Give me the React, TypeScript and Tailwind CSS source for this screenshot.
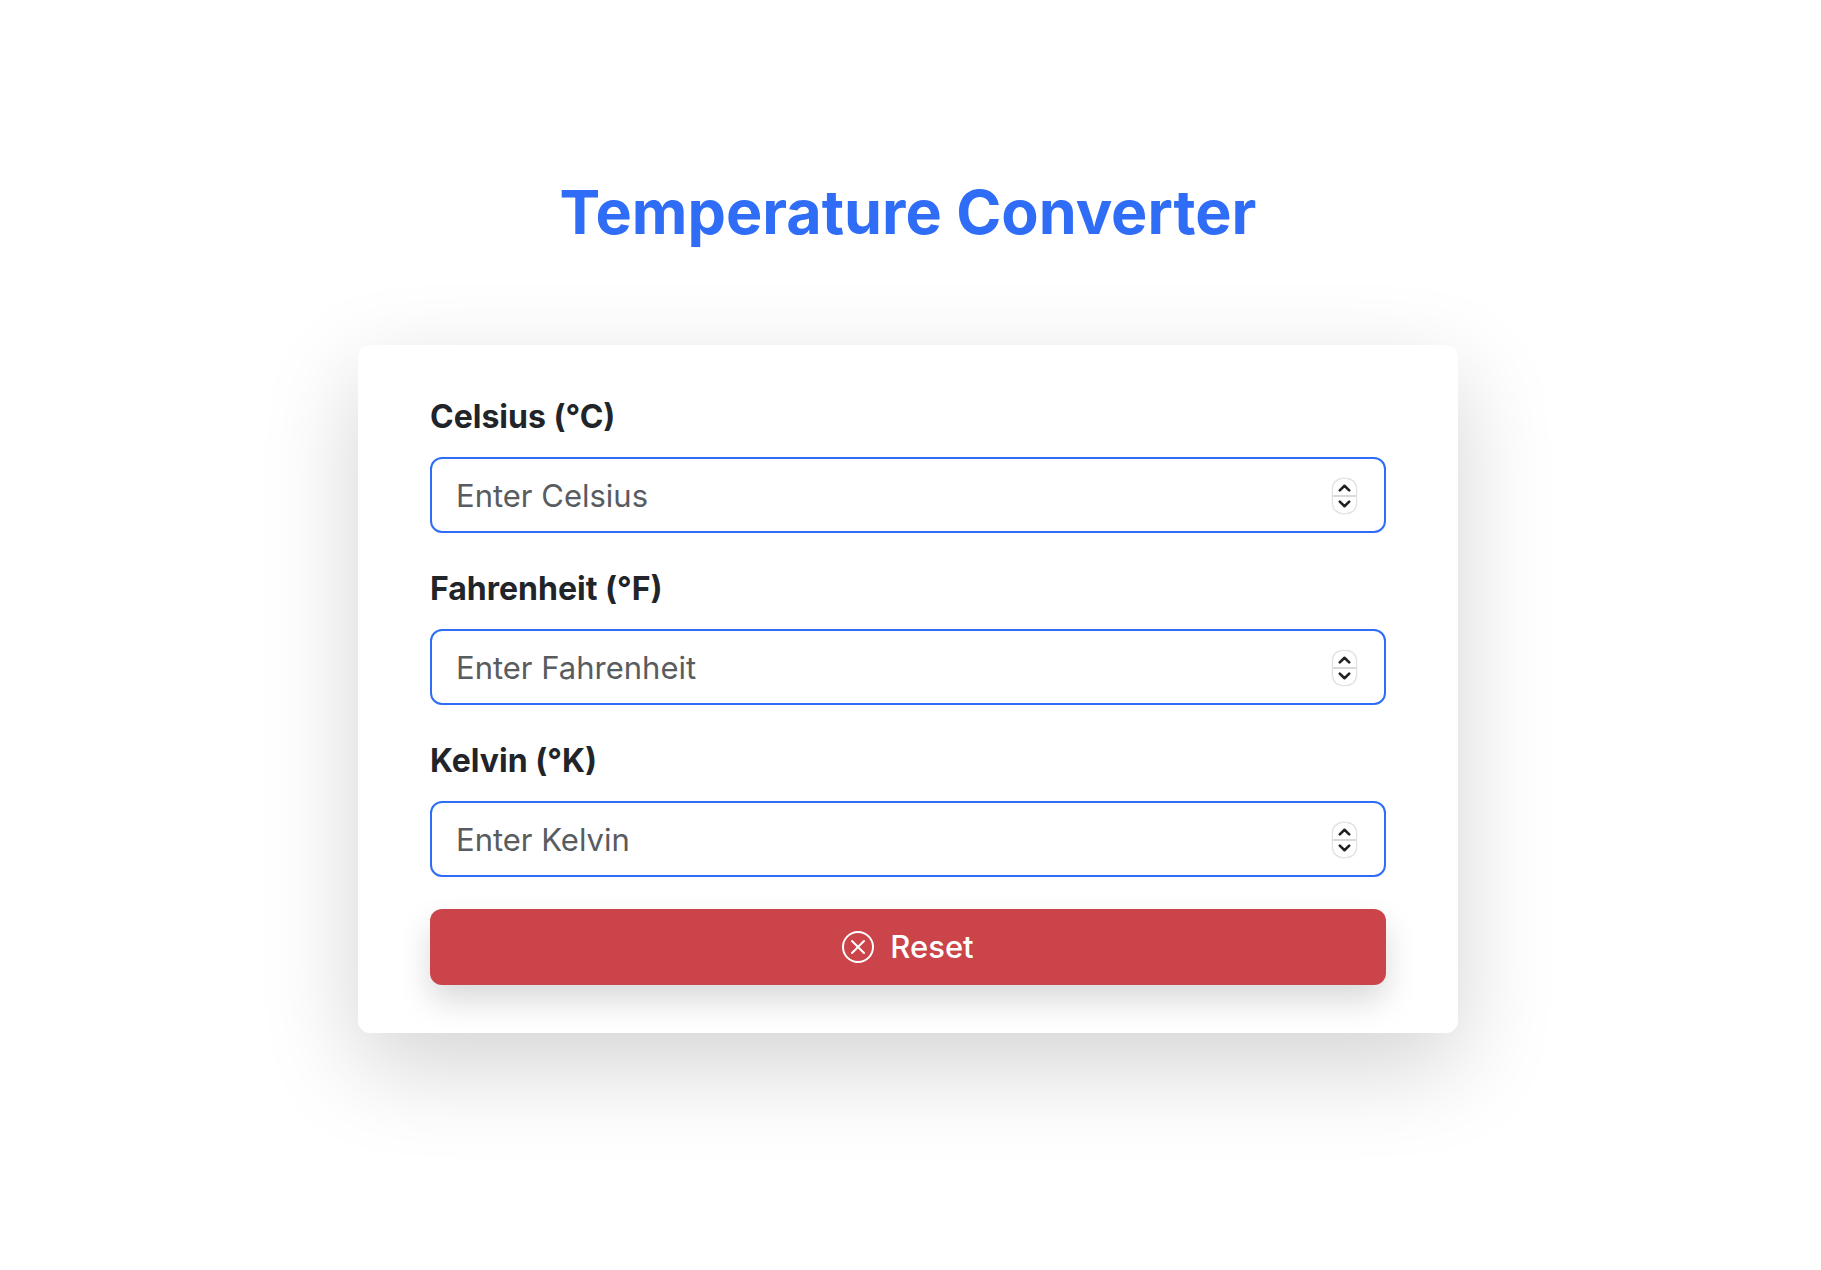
import { useState } from "react";
import { BsXCircle } from "react-icons/bs";

type Scale = "celsius" | "fahrenheit" | "kelvin";
type Values = Record<Scale, string>;

const EMPTY: Values = { celsius: "", fahrenheit: "", kelvin: "" };

const FIELDS: { id: Scale; label: string; placeholder: string }[] = [
  { id: "celsius", label: "Celsius (°C)", placeholder: "Enter Celsius" },
  { id: "fahrenheit", label: "Fahrenheit (°F)", placeholder: "Enter Fahrenheit" },
  { id: "kelvin", label: "Kelvin (°K)", placeholder: "Enter Kelvin" },
];

function convert(scale: Scale, raw: string): Values {
  if (raw === "" || Number.isNaN(Number(raw))) return EMPTY;
  const n = Number(raw);
  const c = scale === "celsius" ? n : scale === "fahrenheit" ? ((n - 32) * 5) / 9 : n - 273.15;
  const fmt = (v: number) => String(Math.round(v * 100) / 100);
  return { celsius: fmt(c), fahrenheit: fmt((c * 9) / 5 + 32), kelvin: fmt(c + 273.15), [scale]: raw };
}

function Chevron({ d }: { d: string }) {
  return (
    <svg
      width="13"
      height="8"
      viewBox="0 0 13 8"
      fill="none"
      stroke="#222"
      strokeWidth="2.6"
      strokeLinecap="round"
      strokeLinejoin="round"
      aria-hidden="true"
    >
      <path d={d} />
    </svg>
  );
}

function Field(props: {
  id: Scale;
  label: string;
  placeholder: string;
  value: string;
  onChange: (v: string) => void;
}) {
  const step = (d: number) => props.onChange(String(Number(props.value || 0) + d));
  return (
    <div className="mb-8">
      <label htmlFor={props.id} className="mb-4 block text-[32px] leading-[48px] font-bold">
        {props.label}
      </label>
      <div className="flex h-[76px] items-center rounded-xl border-2 border-[#2f6df6] bg-white pt-0.5 pr-7 pl-6">
        <input
          id={props.id}
          type="number"
          placeholder={props.placeholder}
          value={props.value}
          onChange={(e) => props.onChange(e.target.value)}
          className="min-w-0 flex-1 text-[31px] leading-[48px] outline-none [appearance:textfield] placeholder:text-[#595c5f]"
        />
        <div className="flex h-[34px] w-[23px] flex-col overflow-hidden rounded-[9px] bg-white shadow-[0_0_2px_rgba(0,0,0,0.45)]">
          <button
            type="button"
            tabIndex={-1}
            aria-label={"Increase " + props.label}
            onClick={() => step(1)}
            className="flex h-[18px] items-end justify-center border-b-2 border-[#dadada] pb-[3px]"
          >
            <Chevron d="M1.8 6.4 6.5 1.8l4.7 4.6" />
          </button>
          <button
            type="button"
            tabIndex={-1}
            aria-label={"Decrease " + props.label}
            onClick={() => step(-1)}
            className="flex flex-1 items-start justify-center pt-[3px]"
          >
            <Chevron d="m1.8 1.6 4.7 4.6 4.7-4.6" />
          </button>
        </div>
      </div>
    </div>
  );
}

export default function App() {
  const [values, setValues] = useState<Values>(EMPTY);
  return (
    <main className="min-h-screen bg-white pt-[173px] pr-[5px] pb-24 font-['Inter',sans-serif] text-[#212529]">
      <div className="mx-auto w-full max-w-[1100px]">
        <h1 className="mb-[94px] text-center text-[61px] leading-[78px] font-bold text-[#2f6df6]">
          Temperature Converter
        </h1>
        <form
          onSubmit={(e) => e.preventDefault()}
          className="rounded-xl bg-white px-[72px] py-12 shadow-[0_32px_96px_rgba(0,0,0,0.175)]"
        >
          {FIELDS.map((f) => (
            <Field
              key={f.id}
              id={f.id}
              label={f.label}
              placeholder={f.placeholder}
              value={values[f.id]}
              onChange={(v) => setValues(convert(f.id, v))}
            />
          ))}
          <button
            type="button"
            onClick={() => setValues(EMPTY)}
            className="flex h-[76px] w-full items-center justify-center gap-4 rounded-xl bg-[#ca444a] text-[31px] leading-[48px] font-medium text-white shadow-[0_16px_32px_rgba(0,0,0,0.15)]"
          >
            <BsXCircle size={32} aria-hidden="true" />
            Reset
          </button>
        </form>
      </div>
    </main>
  );
}
